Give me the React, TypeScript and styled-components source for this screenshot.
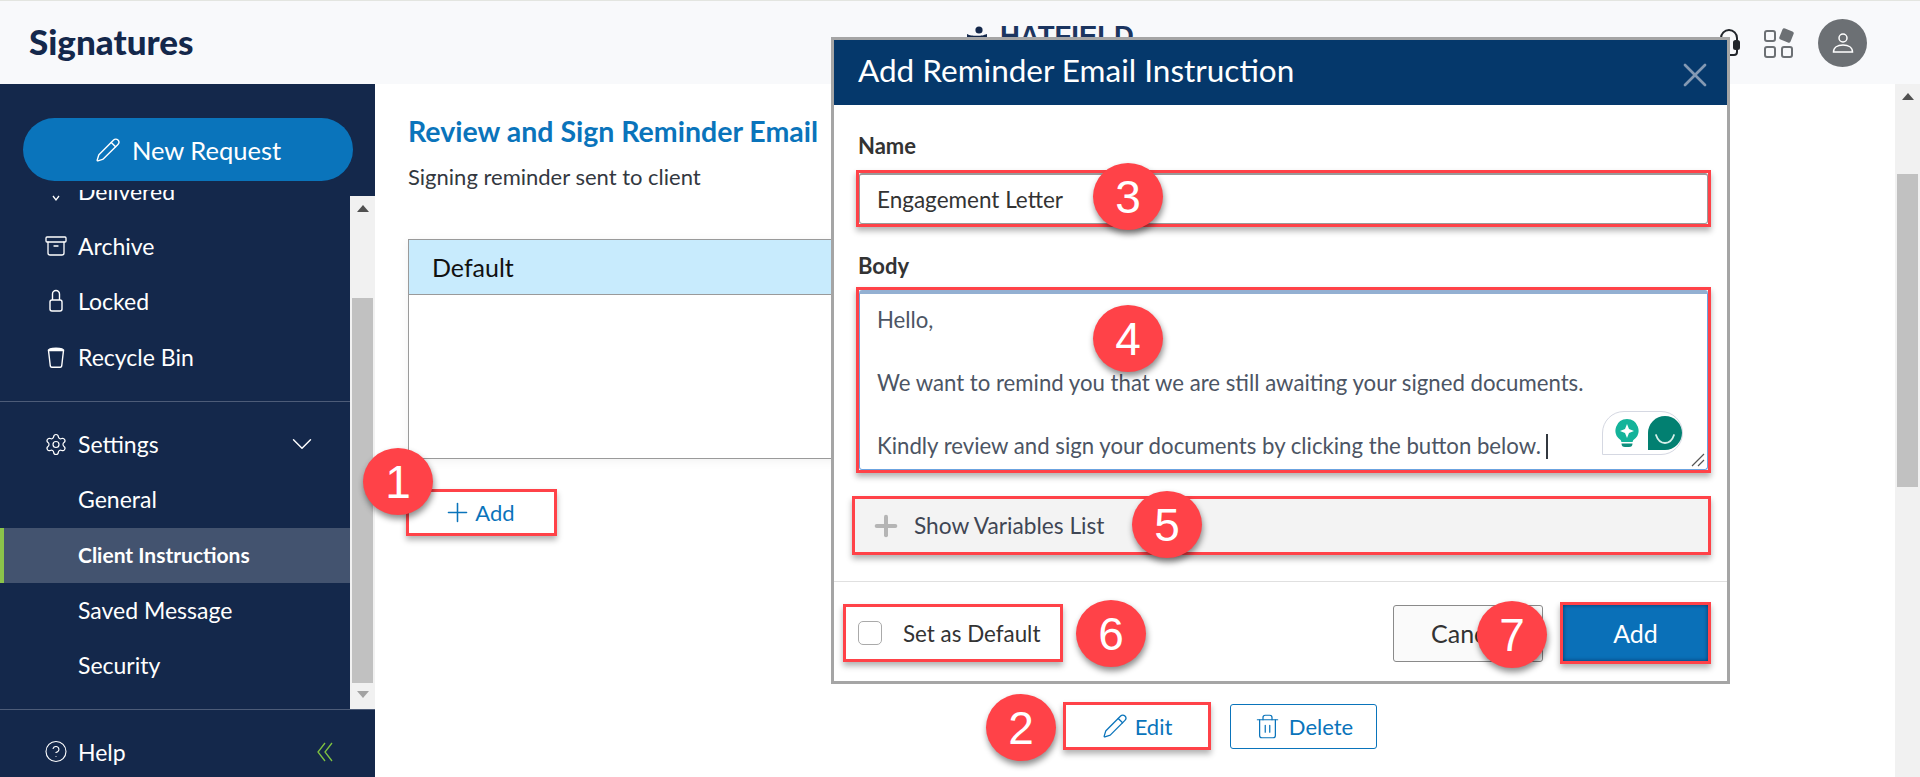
import styled, { createGlobalStyle } from "styled-components";
import { Archive, ChevronDown, CircleHelp, Pencil, Plus, Settings, Trash2, X } from "lucide-react";

const FONT = `Lato, "Noto Sans", sans-serif`;
const RED = "#ff4248";
const BLUE = "#0a74bb";
const NAVY = "#14284b";

const App = () => {
  return (
    <Page>
      <GlobalStyle />
      <Header>
        <Brand>Signatures</Brand>
        <Logo>
          <LogoMark width="20" height="22" viewBox="0 0 20 22" fill={NAVY}>
            <circle cx="12" cy="4" r="3.6" />
            <path d="M0 8c3 1.500 5 1.800 10 1.800s6-.5 10-1.800v5c-3 1.200-6 1.500-10 1.500s-7-.4-10-1.500z" />
          </LogoMark>
          <LogoText>HATFIELD</LogoText>
        </Logo>
        <HeaderIcons>
          <svg width="22" height="30" viewBox="0 0 22 30" fill="none" stroke="#22262b" strokeWidth="2">
            <path d="M3 14V10a8 8 0 0 1 16 0v4" />
            <path d="M19 20v4a3 3 0 0 1-3 3h-4" />
            <rect x="16" y="13" width="5" height="8" rx="1.500" fill="#22262b" />
          </svg>
          <svg width="30" height="30" viewBox="0 0 30 30" fill="none" stroke="#6c7074" strokeWidth="2">
            <rect x="1" y="3" width="10" height="10" rx="2" />
            <rect x="1" y="19" width="10" height="10" rx="2" />
            <rect x="18" y="19" width="10" height="10" rx="2" />
            <rect x="16.500" y="1.500" width="12" height="12" rx="2" fill="#6c7074" stroke="none" transform="rotate(22 22.500 7.500)" />
          </svg>
          <Avatar>
            <svg width="24" height="24" viewBox="0 0 24 24" fill="none" stroke="#fff" strokeWidth="1.500">
              <circle cx="12" cy="7" r="4" />
              <path d="M2.500 21c0-4.500 4-7 9.500-7s9.500 2.500 9.500 7z" />
            </svg>
          </Avatar>
        </HeaderIcons>
      </Header>

      <Body>
        <Sidebar>
          <SidebarTop>
            <NewRequest>
              <Pencil size={26} strokeWidth={1.3} />
              New Request
            </NewRequest>
          </SidebarTop>
          <SidebarMiddle>
            <NavScroll>
              <NavItem $scrolled>
                <NavIcon>
                  <svg width="24" height="24" viewBox="0 0 24 24" fill="none" stroke="#fff" strokeWidth="1.300">
                    <path d="M9 17l3 4 3-4" />
                  </svg>
                </NavIcon>
                Delivered
              </NavItem>
              <NavItem>
                <NavIcon>
                  <Archive size={24} strokeWidth={1.3} />
                </NavIcon>
                Archive
              </NavItem>
              <NavItem>
                <NavIcon>
                  <svg width="24" height="24" viewBox="0 0 24 24" fill="none" stroke="#fff" strokeWidth="1.400">
                    <rect x="6" y="11" width="12" height="11" rx="2" />
                    <path d="M8.500 11V5a3.500 3.500 0 0 1 7 0v6" />
                  </svg>
                </NavIcon>
                Locked
              </NavItem>
              <NavItem>
                <NavIcon>
                  <svg width="24" height="24" viewBox="0 0 24 24" fill="none" stroke="#fff" strokeWidth="1.400">
                    <path d="M4.500 5.500h15l-1.800 15.500a1.500 1.500 0 0 1-1.500 1.200H7.800a1.500 1.500 0 0 1-1.500-1.200z" />
                    <path d="M4.500 5.500c0-3 15-3 15 0" fill="#fff" />
                  </svg>
                </NavIcon>
                Recycle Bin
              </NavItem>
              <NavDivider />
              <SettingsItem>
                <NavIcon>
                  <Settings size={25} strokeWidth={1.2} />
                </NavIcon>
                Settings
                <Chevron>
                  <ChevronDown size={34} strokeWidth={1} />
                </Chevron>
              </SettingsItem>
              <SubItem>General</SubItem>
              <SubItem $active>Client Instructions</SubItem>
              <SubItem>Saved Message</SubItem>
              <SubItem>Security</SubItem>
            </NavScroll>
            <ScrollTrack>
              <ArrowUp />
              <SideThumb />
              <ArrowDown />
            </ScrollTrack>
          </SidebarMiddle>
          <SidebarFooter>
            <NavIcon>
              <CircleHelp size={25} strokeWidth={1.1} />
            </NavIcon>
            Help
            <Collapse>
              <svg width="16" height="20" viewBox="0 0 16 20" fill="none" stroke="currentColor" strokeWidth="1.300">
                <path d="M8 1L1 10l7 9" />
                <path d="M15 1L8 10l7 9" />
              </svg>
            </Collapse>
          </SidebarFooter>
        </Sidebar>

        <Main>
          <Heading>Review and Sign Reminder Email</Heading>
          <Description>Signing reminder sent to client</Description>
          <Table>
            <TableHead>Default</TableHead>
          </Table>
          <AddLink>
            <Plus size={31} strokeWidth={1.2} />
            Add
          </AddLink>
          <RowActions>
            <EditButton>
              <Pencil size={26} strokeWidth={1.2} />
              Edit
            </EditButton>
            <DeleteButton>
              <Trash2 size={27} strokeWidth={1.1} />
              Delete
            </DeleteButton>
          </RowActions>
        </Main>

        <PageScroll>
          <ArrowUp />
          <PageThumb />
        </PageScroll>
      </Body>

      <Dialog>
        <DialogHeader>
          <DialogTitle>Add Reminder Email Instruction</DialogTitle>
          <X size={40} strokeWidth={1.6} color="#8499b3" />
        </DialogHeader>
        <DialogBody>
          <FieldLabel>Name</FieldLabel>
          <NameBox>
            <NameInput>Engagement Letter</NameInput>
          </NameBox>
          <FieldLabel $gap>Body</FieldLabel>
          <BodyBox>
            <BodyInput>
              <BodyLine>Hello,</BodyLine>
              <BodyLine />
              <BodyLine>We want to remind you that we are still awaiting your signed documents.</BodyLine>
              <BodyLine />
              <BodyLine>
                Kindly review and sign your documents by clicking the button below.
                <Caret />
              </BodyLine>
              <Grammar>
                <svg width="26" height="30" viewBox="0 0 26 30">
                  <path d="M13 1a11.500 11.500 0 0 0-7 20.600c.8.7 1.300 1.400 1.300 2.400h11.400c0-1 .5-1.700 1.300-2.400A11.500 11.500 0 0 0 13 1z" fill="#14b39a" />
                  <path d="M13 6l2 5 5 2-5 2-2 5-2-5-5-2 5-2z" fill="#fff" />
                  <path d="M7.500 25.500h11a3.500 3.500 0 0 1-3.500 3.500h-4a3.500 3.500 0 0 1-3.500-3.500z" fill="#0f8f7d" />
                </svg>
                <svg width="34" height="34" viewBox="0 0 34 34">
                  <path d="M17 0a17 17 0 0 1 0 34H0V17A17 17 0 0 1 17 0z" fill="#028071" />
                  <path d="M8 19c2 6 5 8 9 8s7-2 9-8" fill="none" stroke="#d5efe9" strokeWidth="1.800" strokeLinecap="round" />
                </svg>
              </Grammar>
              <Resize>
                <svg width="14" height="14" viewBox="0 0 14 14" stroke="#555" strokeWidth="1.200">
                  <path d="M1 13L13 1M7 13l6-6" />
                </svg>
              </Resize>
            </BodyInput>
          </BodyBox>
          <VariablesBox>
            <Plus size={32} strokeWidth={3} color="#b5b5b5" />
            <VariablesText>Show Variables List</VariablesText>
          </VariablesBox>
        </DialogBody>
        <DialogFooter>
          <DefaultBox>
            <Checkbox />
            <DefaultText>Set as Default</DefaultText>
          </DefaultBox>
          <CancelButton>Cancel</CancelButton>
          <SubmitBox>
            <SubmitButton>Add</SubmitButton>
          </SubmitBox>
        </DialogFooter>
      </Dialog>

      <Callout $x={363} $y={448}>1</Callout>
      <Callout $x={986} $y={694}>2</Callout>
      <Callout $x={1093} $y={163}>3</Callout>
      <Callout $x={1093} $y={305}>4</Callout>
      <Callout $x={1132} $y={491}>5</Callout>
      <Callout $x={1076} $y={600}>6</Callout>
      <Callout $x={1477} $y={601}>7</Callout>
    </Page>
  );
};

export default App;

const GlobalStyle = createGlobalStyle`
  html, body {
    margin: 0;
    padding: 0;
    background: #fff;
    overflow: hidden;
  }
  * {
    box-sizing: border-box;
  }
`;

const Page = styled.div`
  position: relative;
  display: flex;
  flex-direction: column;
  width: 1920px;
  height: 777px;
  overflow: hidden;
  font-family: ${FONT};
`;

const Header = styled.header`
  display: flex;
  align-items: center;
  flex: none;
  height: 84px;
  padding: 0 53px 0 29px;
  background: #f8f9fb;
  border-top: 1px solid #e3e5e0;
`;

const Brand = styled.div`
  width: 164px;
  margin-top: -4px;
  color: ${NAVY};
  font-size: 35px;
  font-weight: 900;
  white-space: nowrap;
`;

const Logo = styled.div`
  display: flex;
  align-items: flex-start;
  gap: 13px;
  align-self: flex-start;
  margin: 21px 0 0 774px;
`;

const LogoMark = styled.svg`
  flex: none;
  margin-top: 4px;
`;

const LogoText = styled.div`
  color: #1b3560;
  font-family: "Liberation Sans", sans-serif;
  font-size: 27.500px;
  font-weight: 700;
  line-height: 27.500px;
`;

const HeaderIcons = styled.div`
  display: flex;
  align-items: center;
  gap: 24px;
  margin-left: auto;
`;

const Avatar = styled.div`
  display: flex;
  align-items: center;
  justify-content: center;
  width: 49px;
  height: 48px;
  border-radius: 50%;
  background: #6c7074;
`;

const Body = styled.div`
  display: flex;
  flex: 1;
  min-height: 0;
`;

const Sidebar = styled.aside`
  display: flex;
  flex-direction: column;
  flex: none;
  width: 375px;
  background: ${NAVY};
  color: #fff;
  font-size: 23px;
`;

const SidebarTop = styled.div`
  flex: none;
  height: 106px;
  padding: 34px 22px 0 23px;
`;

const NewRequest = styled.div`
  display: flex;
  align-items: center;
  justify-content: center;
  gap: 11px;
  height: 63px;
  border-radius: 32px;
  background: ${BLUE};
  font-size: 25.500px;
`;

const SidebarMiddle = styled.div`
  display: flex;
  flex: none;
  height: 519px;
`;

const NavScroll = styled.div`
  flex: none;
  width: 350px;
  overflow: hidden;
`;

const NavItem = styled.div<{ $scrolled?: boolean }>`
  display: flex;
  align-items: center;
  height: 55.400px;
  margin-top: ${(p) => (p.$scrolled ? "-27px" : "0")};
  padding-left: 44px;
`;

const NavIcon = styled.span`
  display: flex;
  align-items: center;
  justify-content: center;
  flex: none;
  width: 24px;
  margin-right: 10px;
`;

const NavDivider = styled.div`
  height: 1px;
  margin: 16.500px 0 16px;
  background: #4d5c78;
  width: 375px;
`;

const SettingsItem = styled.div`
  display: flex;
  align-items: center;
  height: 54px;
  padding: 0 31px 2px 44px;
`;

const Chevron = styled.span`
  display: flex;
  margin-left: auto;
`;

const SubItem = styled.div<{ $active?: boolean }>`
  display: flex;
  align-items: center;
  height: 55.500px;
  padding-bottom: 2px;
  padding-left: ${(p) => (p.$active ? "74px" : "78px")};
  border-left: ${(p) => (p.$active ? "4px solid #8bc34a" : "none")};
  background: ${(p) => (p.$active ? "#43536f" : "transparent")};
  font-size: ${(p) => (p.$active ? "21px" : "inherit")};
  font-weight: ${(p) => (p.$active ? 700 : 400)};
`;

const ScrollTrack = styled.div`
  display: flex;
  flex-direction: column;
  flex: none;
  width: 25px;
  margin-top: 6px;
  background: #f1f1f1;
  align-items: center;
`;

const ArrowUp = styled.div`
  flex: none;
  width: 0;
  height: 0;
  margin: 9px 0 8px;
  border-left: 6px solid transparent;
  border-right: 6px solid transparent;
  border-bottom: 7px solid #505050;
`;

const ArrowDown = styled.div`
  flex: none;
  width: 0;
  height: 0;
  margin-top: 8px;
  border-left: 6px solid transparent;
  border-right: 6px solid transparent;
  border-top: 7px solid #a3a3a3;
`;

const SideThumb = styled.div`
  flex: none;
  width: 21px;
  height: 385px;
  margin-top: 78px;
  background: #c1c1c1;
`;

const SidebarFooter = styled.div`
  display: flex;
  align-items: center;
  flex: 1;
  padding: 16px 42px 0 44px;
  border-top: 1px solid #4d5c78;
`;

const Collapse = styled.span`
  display: flex;
  margin-left: auto;
  color: #7fc241;
`;

const Main = styled.main`
  display: flex;
  flex-direction: column;
  flex: 1;
  min-width: 0;
  padding: 30px 0 0 33px;
  background: #fff;
`;

const Heading = styled.h1`
  margin: 0;
  height: 34px;
  color: ${BLUE};
  font-size: 28.500px;
  font-weight: 700;
  line-height: 34px;
  white-space: nowrap;
`;

const Description = styled.div`
  margin-top: 15px;
  height: 28px;
  color: #33383f;
  font-size: 22px;
  line-height: 28px;
`;

const Table = styled.div`
  flex: none;
  width: 969px;
  height: 220px;
  margin-top: 48px;
  border: 1px solid #9a9a9a;
  box-shadow: 0 2px 10px rgba(0, 0, 0, 0.06);
`;

const TableHead = styled.div`
  display: flex;
  align-items: center;
  height: 55px;
  padding-left: 23px;
  background: #c8ebfd;
  border-bottom: 1px solid #9a9a9a;
  color: #111;
  font-size: 25px;
`;

const AddLink = styled.div`
  display: flex;
  align-items: center;
  justify-content: center;
  gap: 2px;
  flex: none;
  width: 151px;
  height: 47px;
  margin: 30px 0 0 -2px;
  padding-right: 6px;
  border: 3px solid ${RED};
  box-shadow: 0 4px 6px rgba(0, 0, 0, 0.3);
  color: ${BLUE};
  font-size: 22px;
`;

const RowActions = styled.div`
  display: flex;
  align-items: center;
  justify-content: flex-end;
  gap: 19px;
  width: 969px;
  margin-top: 166px;
`;

const EditButton = styled.div`
  display: flex;
  align-items: center;
  justify-content: center;
  gap: 7px;
  width: 148px;
  height: 48px;
  border: 3px solid ${RED};
  box-shadow: 0 4px 6px rgba(0, 0, 0, 0.3);
  color: ${BLUE};
  font-size: 22px;
`;

const DeleteButton = styled.div`
  display: flex;
  align-items: center;
  justify-content: center;
  gap: 8px;
  width: 147px;
  height: 45px;
  border: 1px solid ${BLUE};
  border-radius: 3px;
  color: ${BLUE};
  font-size: 22px;
`;

const PageScroll = styled.div`
  display: flex;
  flex-direction: column;
  align-items: center;
  flex: none;
  width: 25px;
  background: #f1f1f1;
`;

const PageThumb = styled.div`
  width: 21px;
  height: 313px;
  margin-top: 66px;
  background: #c1c1c1;
`;

const Dialog = styled.div`
  position: absolute;
  left: 831px;
  top: 37px;
  display: flex;
  flex-direction: column;
  width: 899px;
  height: 647px;
  border: 3px solid #a5a5a5;
  background: #fff;
`;

const DialogHeader = styled.div`
  display: flex;
  align-items: center;
  justify-content: space-between;
  flex: none;
  height: 65px;
  padding: 4px 12px 0 24px;
  background: #05386b;
`;

const DialogTitle = styled.div`
  margin-top: -10px;
  color: #fff;
  font-size: 31.500px;
`;

const DialogBody = styled.div`
  display: flex;
  flex-direction: column;
  flex: none;
  padding: 27px 16px 26px 22px;
  border-bottom: 1px solid #e0e0e0;
`;

const FieldLabel = styled.div<{ $gap?: boolean }>`
  height: 28px;
  margin-top: ${(p) => (p.$gap ? "25px" : "0")};
  margin-bottom: ${(p) => (p.$gap ? "7px" : "10px")};
  padding-left: 2px;
  color: #333;
  font-size: 22px;
  font-weight: 700;
  line-height: 28px;
`;

const NameBox = styled.div`
  flex: none;
  height: 57px;
  border: 3px solid ${RED};
  box-shadow: 0 4px 6px rgba(0, 0, 0, 0.3);
`;

const NameInput = styled.div`
  display: flex;
  align-items: center;
  height: 100%;
  padding-left: 17px;
  border: 1px solid #9a9a9a;
  border-top-width: 2px;
  border-radius: 3px;
  color: #333;
  font-size: 22.500px;
`;

const BodyBox = styled.div`
  flex: none;
  height: 186px;
  border: 3px solid ${RED};
  box-shadow: 0 4px 6px rgba(0, 0, 0, 0.3);
`;

const BodyInput = styled.div`
  position: relative;
  height: 100%;
  padding: 10px 17px 0;
  border: 1px solid #6ba3e0;
  border-top: 4px solid #93b0d2;
  border-radius: 3px;
  color: #4c5564;
  font-size: 22.200px;
`;

const BodyLine = styled.div`
  height: 31.500px;
  line-height: 31.500px;
  white-space: nowrap;
`;

const Caret = styled.span`
  display: inline-block;
  width: 2px;
  height: 25px;
  margin-left: 5px;
  vertical-align: -5px;
  background: #33383f;
`;

const Grammar = styled.div`
  position: absolute;
  right: 24px;
  bottom: 14px;
  display: flex;
  align-items: center;
  gap: 8px;
  width: 81px;
  height: 44px;
  padding-left: 11px;
  background: #fff;
  border: 1px solid #d5d8e2;
  border-radius: 22px 22px 22px 0;
`;

const Resize = styled.span`
  position: absolute;
  right: 2px;
  bottom: 2px;
  display: flex;
`;

const VariablesBox = styled.div`
  display: flex;
  align-items: center;
  flex: none;
  height: 59px;
  margin: 23px 0 0 -4px;
  padding-left: 15px;
  border: 3px solid ${RED};
  box-shadow: 0 4px 6px rgba(0, 0, 0, 0.3);
  background: #f3f3f3;
`;

const VariablesText = styled.div`
  margin-left: 12px;
  color: #3f4654;
  font-size: 22.700px;
`;

const DialogFooter = styled.div`
  display: flex;
  align-items: center;
  flex: none;
  padding: 20px 16px 0 9px;
`;

const DefaultBox = styled.div`
  display: flex;
  align-items: center;
  width: 220px;
  height: 58px;
  padding-left: 12px;
  border: 3px solid ${RED};
  box-shadow: 0 4px 6px rgba(0, 0, 0, 0.3);
`;

const Checkbox = styled.span`
  flex: none;
  width: 24px;
  height: 24px;
  border: 1px solid #aaa;
  border-radius: 5px;
`;

const DefaultText = styled.span`
  margin-left: 21px;
  color: #333;
  font-size: 22.400px;
`;

const CancelButton = styled.div`
  display: flex;
  align-items: center;
  flex: none;
  width: 150px;
  height: 57px;
  margin-left: auto;
  padding-left: 37px;
  border: 1px solid #8a8a8a;
  border-radius: 3px;
  background: #fafafa;
  color: #333;
  font-size: 25px;
`;

const SubmitBox = styled.div`
  flex: none;
  width: 151px;
  height: 62px;
  margin-left: 17px;
  border: 3px solid ${RED};
  box-shadow: 0 4px 6px rgba(0, 0, 0, 0.3);
`;

const SubmitButton = styled.div`
  display: flex;
  align-items: center;
  justify-content: center;
  height: 100%;
  background: #0a70b8;
  box-shadow: inset 0 0 4px rgba(0, 30, 70, 0.7);
  color: #fff;
  font-size: 25px;
`;

const Callout = styled.div<{ $x: number; $y: number }>`
  position: absolute;
  left: ${(p) => p.$x}px;
  top: ${(p) => p.$y}px;
  display: flex;
  align-items: center;
  justify-content: center;
  width: 70px;
  height: 67px;
  border-radius: 50%;
  background: ${RED};
  box-shadow: 1px 4px 6px rgba(0, 0, 0, 0.45);
  color: #fff;
  font-family: "Liberation Sans", sans-serif;
  font-size: 46px;
`;
